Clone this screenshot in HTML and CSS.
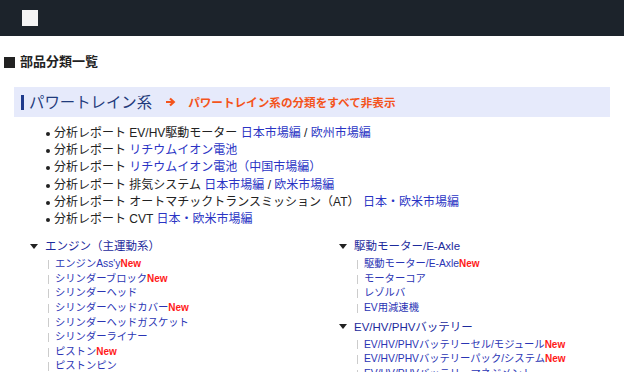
FILE: index.html
```html
<!DOCTYPE html>
<html lang="ja">
<head>
<meta charset="utf-8">
<link rel="stylesheet" href="styles.css">
</head>
<body>
<header class="topbar"><div class="logo"></div></header>
<h1 class="page-title"><span class="sq"></span>部品分類一覧</h1>
<section class="section">
  <div class="section-head">
    <h2 class="section-title">パワートレイン系</h2>
    <a class="hide-all"><svg class="arrow" viewBox="0 0 10 10" width="10" height="10"><path d="M0 5H7M4 1.5L7.8 5L4 8.5" fill="none" stroke="#f4541c" stroke-width="2.2"/></svg>パワートレイン系の分類をすべて非表示</a>
  </div>
  <ul class="reports">
    <li>分析レポート EV/HV駆動モーター <a>日本市場編</a> / <a>欧州市場編</a></li>
    <li>分析レポート <a>リチウムイオン電池</a></li>
    <li>分析レポート <a>リチウムイオン電池（中国市場編）</a></li>
    <li>分析レポート 排気システム <a>日本市場編</a> / <a>欧米市場編</a></li>
    <li>分析レポート オートマチックトランスミッション（AT） <a>日本・欧米市場編</a></li>
    <li>分析レポート CVT <a>日本・欧米市場編</a></li>
  </ul>
  <div class="cats">
    <div class="col">
      <div class="cat">
        <div class="cat-title"><span class="tri"></span>エンジン（主運動系）</div>
        <ul class="subs">
          <li><a>エンジンAss'y</a><span class="new">New</span></li>
          <li><a>シリンダーブロック</a><span class="new">New</span></li>
          <li><a>シリンダーヘッド</a></li>
          <li><a>シリンダーヘッドカバー</a><span class="new">New</span></li>
          <li><a>シリンダーヘッドガスケット</a></li>
          <li><a>シリンダーライナー</a></li>
          <li><a>ピストン</a><span class="new">New</span></li>
          <li><a>ピストンピン</a></li>
        </ul>
      </div>
    </div>
    <div class="col">
      <div class="cat">
        <div class="cat-title"><span class="tri"></span>駆動モーター/E-Axle</div>
        <ul class="subs">
          <li><a>駆動モーター/E-Axle</a><span class="new">New</span></li>
          <li><a>モーターコア</a></li>
          <li><a>レゾルバ</a></li>
          <li><a>EV用減速機</a></li>
        </ul>
      </div>
      <div class="cat">
        <div class="cat-title"><span class="tri"></span>EV/HV/PHVバッテリー</div>
        <ul class="subs">
          <li><a>EV/HV/PHVバッテリーセル/モジュール</a><span class="new">New</span></li>
          <li><a>EV/HV/PHVバッテリーパック/システム</a><span class="new">New</span></li>
          <li><a>EV/HV/PHVバッテリーマネジメント</a></li>
        </ul>
      </div>
    </div>
  </div>
</section>
</body>
</html>
```
FILE: styles.css
```css
html, body { margin: 0; padding: 0; background: #fff; }
body {
  font-family: "Liberation Sans", "Noto Sans CJK JP", sans-serif;
  color: #222;
  width: 624px;
  height: 372px;
  overflow: hidden;
}
a { color: #2a34c4; text-decoration: none; }
ul { list-style: none; margin: 0; padding: 0; }

.topbar {
  height: 36px;
  background: #1c232b;
  display: flex;
  align-items: center;
  padding-left: 22px;
}
.logo { width: 16px; height: 16px; background: #f4f4f4; }

.page-title {
  margin: 0;
  padding: 19px 0 0 4px;
  height: 33px;
  box-sizing: border-box;
  font-size: 13px;
  line-height: 18px;
  font-weight: bold;
  color: #222;
  display: flex;
  align-items: center;
}
.page-title .sq {
  width: 11px;
  height: 11px;
  background: #222;
  margin-right: 5px;
}

.section { margin: 18px 14px 0 14px; }
.section-head {
  height: 30px;
  background: #e6eafb;
  display: flex;
  align-items: center;
  padding-left: 7px;
}
.section-title {
  margin: 0;
  font-size: 15.4px;
  font-weight: normal;
  color: #1f3a7c;
  border-left: 3px solid #1f3a8c;
  padding-left: 5px;
  line-height: 15px;
}
.hide-all {
  margin-left: 14px;
  display: flex;
  align-items: center;
  color: #f4541c;
  font-size: 11.6px;
  font-weight: bold;
}
.arrow { margin-right: 12px; }

.reports {
  padding: 8px 0 0 40px;
  font-size: 12px;
  line-height: 17.2px;
}
.reports li { position: relative; }
.reports li::before {
  content: "";
  position: absolute;
  left: -8px;
  top: 7px;
  width: 4px;
  height: 4px;
  border-radius: 50%;
  background: #222;
}

.cats {
  display: grid;
  grid-template-columns: 309px 1fr;
  padding: 9px 0 0 16px;
}
.cat { margin-bottom: 2px; }
.cat-title {
  display: flex;
  align-items: center;
  font-size: 11.5px;
  line-height: 18px;
  color: #1c2a9c;
  margin-bottom: 2px;
}
.tri {
  width: 0; height: 0;
  border-left: 4.5px solid transparent;
  border-right: 4.5px solid transparent;
  border-top: 5px solid #222;
  margin-right: 7px;
}
.subs { padding-left: 18px; font-size: 10.3px; line-height: 14.6px; }
.subs li {
  display: flex;
  align-items: center;
}
.subs li::before {
  content: "";
  width: 1px;
  height: 9px;
  background: #ccc;
  margin-right: 6px;
}
.subs a { color: #2a34b4; }
.new { color: #ff1a1a; font-weight: bold; font-size: 10px; }
```
